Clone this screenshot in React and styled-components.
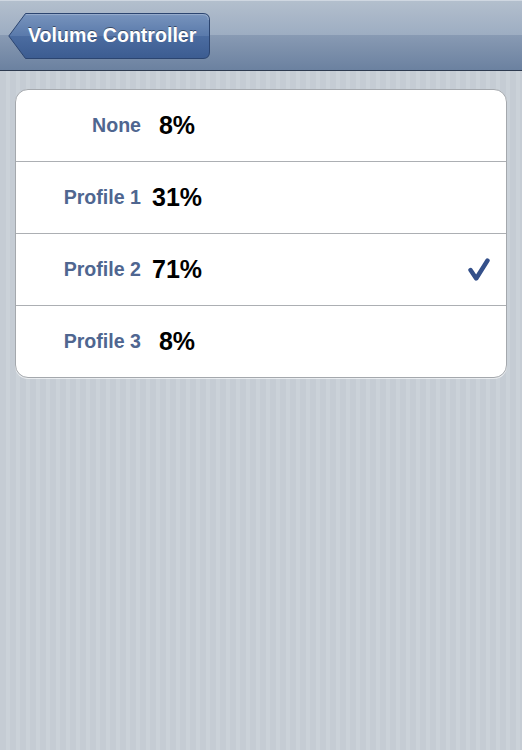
import * as React from "react";
import styled, { createGlobalStyle } from "styled-components";

const GlobalStyle = createGlobalStyle`
  html, body {
    margin: 0;
    padding: 0;
  }
  body {
    font-family: "Liberation Sans", Arial, sans-serif;
    background: #c5ccd4;
  }
`;

const Page = styled.div`
  min-height: 750px;
  background: repeating-linear-gradient(
    90deg,
    #c5ccd4 0px,
    #c5ccd4 6px,
    #cbd2d9 6px,
    #cbd2d9 10px
  );
`;

const NavBar = styled.header`
  height: 71px;
  box-sizing: border-box;
  display: flex;
  align-items: center;
  padding-left: 8px;
  border-top: 1px solid #cfd7e1;
  border-bottom: 1px solid #2d3a4f;
  background: linear-gradient(
    180deg,
    #b3bfcd 0%,
    #9dadc2 49%,
    #889ab3 50%,
    #6b81a0 100%
  );
`;

const BackButton = styled.button`
  position: relative;
  width: 202px;
  height: 46px;
  padding: 0 0 0 20px;
  border: none;
  background: none;
  display: flex;
  align-items: center;
  font-family: "Liberation Sans", Arial, sans-serif;
  font-weight: bold;
  font-size: 19.6px;
  color: #fff;
  text-shadow: 0 -1px 0 rgba(0, 0, 0, 0.45);
  cursor: pointer;

  svg {
    position: absolute;
    left: 0;
    top: 0;
  }

  span {
    position: relative;
  }
`;

const Content = styled.main`
  padding: 18px 15px;
`;

const Card = styled.section`
  background: #fff;
  border: 1px solid #a4a8ad;
  border-radius: 13px;
  overflow: hidden;
  box-shadow: 0 1px 0 rgba(255, 255, 255, 0.6);
`;

const Row = styled.div`
  height: 71px;
  display: grid;
  grid-template-columns: 125px 50px 1fr auto;
  column-gap: 11px;
  align-items: center;
  padding-right: 16px;
  border-top: ${(p) => (p.$first ? "none" : "1px solid #acafb3")};
`;

const Label = styled.span`
  text-align: right;
  font-weight: bold;
  font-size: 19.6px;
  color: #4f6690;
`;

const Value = styled.span`
  text-align: center;
  font-weight: bold;
  font-size: 25px;
  color: #000;
  white-space: nowrap;
`;

const Check = styled.svg`
  width: 22px;
  height: 23px;
  display: block;
`;

const profiles = [
  { name: "None", value: "8%" },
  { name: "Profile 1", value: "31%" },
  { name: "Profile 2", value: "71%", selected: true },
  { name: "Profile 3", value: "8%" },
];

const BackShape = () => (
  <svg width="202" height="46" viewBox="0 0 202 46">
    <defs>
      <linearGradient id="backFill" x1="0" y1="0" x2="0" y2="1">
        <stop offset="0" stopColor="#7894bd" />
        <stop offset="0.5" stopColor="#5a7aab" />
        <stop offset="0.51" stopColor="#4b6ca0" />
        <stop offset="1" stopColor="#3c5c91" />
      </linearGradient>
    </defs>
    <path
      d="M17.5,0.5 H195 Q201.5,0.5 201.5,7 V39 Q201.5,45.5 195,45.5 H17.5 L0.8,23 Z"
      fill="url(#backFill)"
      stroke="#2c4570"
      strokeWidth="1"
    />
    <path
      d="M18,1.6 H195 Q200.4,1.6 200.4,7"
      fill="none"
      stroke="rgba(255,255,255,0.25)"
      strokeWidth="1"
    />
  </svg>
);

const CheckMark = () => (
  <Check viewBox="0 0 22 23">
    <path
      d="M2.5,12 L8.2,20.5 L19.5,2.5"
      fill="none"
      stroke="#34508a"
      strokeWidth="4.4"
      strokeLinecap="round"
      strokeLinejoin="round"
    />
  </Check>
);

const App = () => {
  return (
    <Page>
      <GlobalStyle />
      <NavBar>
        <BackButton>
          <BackShape />
          <span>Volume Controller</span>
        </BackButton>
      </NavBar>
      <Content>
        <Card>
          {profiles.map((profile, i) => (
            <Row key={profile.name} $first={i === 0}>
              <Label>{profile.name}</Label>
              <Value>{profile.value}</Value>
              <span />
              {profile.selected ? <CheckMark /> : <span />}
            </Row>
          ))}
        </Card>
      </Content>
    </Page>
  );
};

export default App;
